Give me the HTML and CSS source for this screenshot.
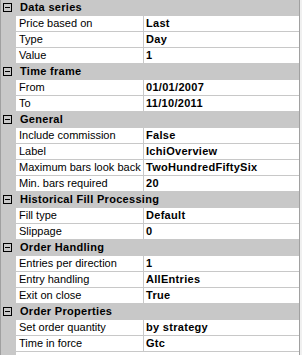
FILE: index.html
```html
<!DOCTYPE html>
<html lang="en">
<head>
    <meta charset="UTF-8">
    <title>Strategy properties</title>
    <link rel="stylesheet" href="styles.css">
</head>
<body>
    <div class="grid">
        <div class="category"><span class="toggle"></span><span class="cat-text">Data series</span></div>
        <div class="row"><div class="label">Price based on</div><div class="value">Last</div></div>
        <div class="row"><div class="label">Type</div><div class="value">Day</div></div>
        <div class="row"><div class="label">Value</div><div class="value">1</div></div>

        <div class="category"><span class="toggle"></span><span class="cat-text">Time frame</span></div>
        <div class="row"><div class="label">From</div><div class="value">01/01/2007</div></div>
        <div class="row"><div class="label">To</div><div class="value">11/10/2011</div></div>

        <div class="category"><span class="toggle"></span><span class="cat-text">General</span></div>
        <div class="row"><div class="label">Include commission</div><div class="value">False</div></div>
        <div class="row"><div class="label">Label</div><div class="value">IchiOverview</div></div>
        <div class="row"><div class="label">Maximum bars look back</div><div class="value">TwoHundredFiftySix</div></div>
        <div class="row"><div class="label">Min. bars required</div><div class="value">20</div></div>

        <div class="category"><span class="toggle"></span><span class="cat-text">Historical Fill Processing</span></div>
        <div class="row"><div class="label">Fill type</div><div class="value">Default</div></div>
        <div class="row"><div class="label">Slippage</div><div class="value">0</div></div>

        <div class="category"><span class="toggle"></span><span class="cat-text">Order Handling</span></div>
        <div class="row"><div class="label">Entries per direction</div><div class="value">1</div></div>
        <div class="row"><div class="label">Entry handling</div><div class="value">AllEntries</div></div>
        <div class="row"><div class="label">Exit on close</div><div class="value">True</div></div>

        <div class="category"><span class="toggle"></span><span class="cat-text">Order Properties</span></div>
        <div class="row"><div class="label">Set order quantity</div><div class="value">by strategy</div></div>
        <div class="row"><div class="label">Time in force</div><div class="value">Gtc</div></div>
    </div>
</body>
</html>
```

FILE: styles.css
```css
* {
    margin: 0;
    padding: 0;
    box-sizing: border-box;
}

body, html {
    height: 100%;
    overflow: hidden;
}

body {
    background-color: #f0f0f0;
    font-family: 'Liberation Sans', Arial, sans-serif;
    font-size: 11px;
    color: #000;
}

.grid {
    width: 300px;
    height: 355px;
    border-left: 1px solid #a0a0a0;
    border-right: 1px solid #a0a0a0;
    background: linear-gradient(to right, #c8c8c8 15px, #fff 15px);
}

.row, .category {
    display: flex;
    height: 16px;
    line-height: 15px;
    border-bottom: 1px solid #c8c8c8;
    white-space: nowrap;
}

.row {
    padding-left: 15px;
}

.label {
    width: 128px;
    padding-left: 3px;
    border-right: 1px solid #c8c8c8;
    background-color: #fff;
    overflow: hidden;
}

.value {
    flex: 1;
    padding-left: 2px;
    font-weight: bold;
    letter-spacing: 0.3px;
    background-color: #fff;
    overflow: hidden;
}

.category {
    background-color: #c8c8c8;
    font-weight: bold;
    letter-spacing: 0.3px;
    align-items: flex-start;
}

.toggle {
    position: relative;
    width: 9px;
    height: 9px;
    margin: 3px 0 0 2px;
    border: 1px solid #000;
}

.toggle::after {
    content: '';
    position: absolute;
    left: 1px;
    top: 3px;
    width: 5px;
    height: 1px;
    background-color: #000;
}

.cat-text {
    padding-left: 8px;
}
```
